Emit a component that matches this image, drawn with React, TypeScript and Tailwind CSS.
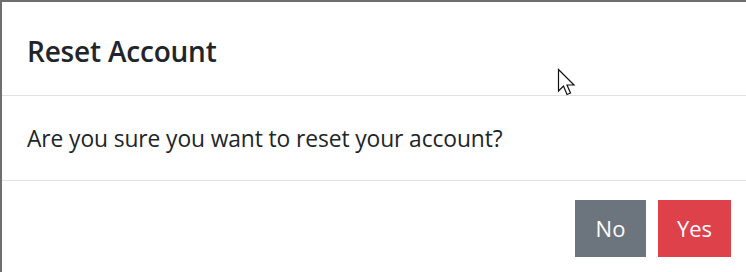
export default function App() {
    return (
        <div
            className="relative h-[272px] w-[746px] overflow-hidden border-l-2 border-t-2 border-[#6e6e6e] bg-white text-[#212529]"
            style={{ fontFamily: '"Open Sans", "Noto Sans", sans-serif' }}
        >
            <div className="flex h-[94px] items-center border-b border-[#dee2e6] pl-[25px] pt-[4px]">
                <h5 className="text-[28px] font-semibold leading-none tracking-[-0.2px]">Reset Account</h5>
            </div>
            <div className="flex h-[85px] items-center border-b border-[#dee2e6] pl-[25px] pt-[2px]">
                <p className="text-[22.8px] leading-none tracking-[-0.1px]">Are you sure you want to reset your account?</p>
            </div>
            <div className="flex justify-end gap-[12px] pr-[15px] pt-[19px]">
                <button className="flex h-[57px] w-[71px] items-center justify-center bg-[#6c757d] text-[22px] text-white">
                    No
                </button>
                <button className="flex h-[57px] w-[73px] items-center justify-center bg-[#df414a] text-[22px] text-white">
                    Yes
                </button>
            </div>
            {/* mouse pointer captured in the screenshot */}
            <svg
                className="absolute left-[555px] top-[66px]"
                width="22"
                height="30"
                viewBox="0 0 22 30"
            >
                <path
                    d="M1.5 1.5 L1.5 23 L6.5 18 L10 26.5 L13.5 25 L10 17 L17 17 Z"
                    fill="white"
                    stroke="#111"
                    strokeWidth="1.2"
                    strokeLinejoin="miter"
                />
            </svg>
        </div>
    );
}
